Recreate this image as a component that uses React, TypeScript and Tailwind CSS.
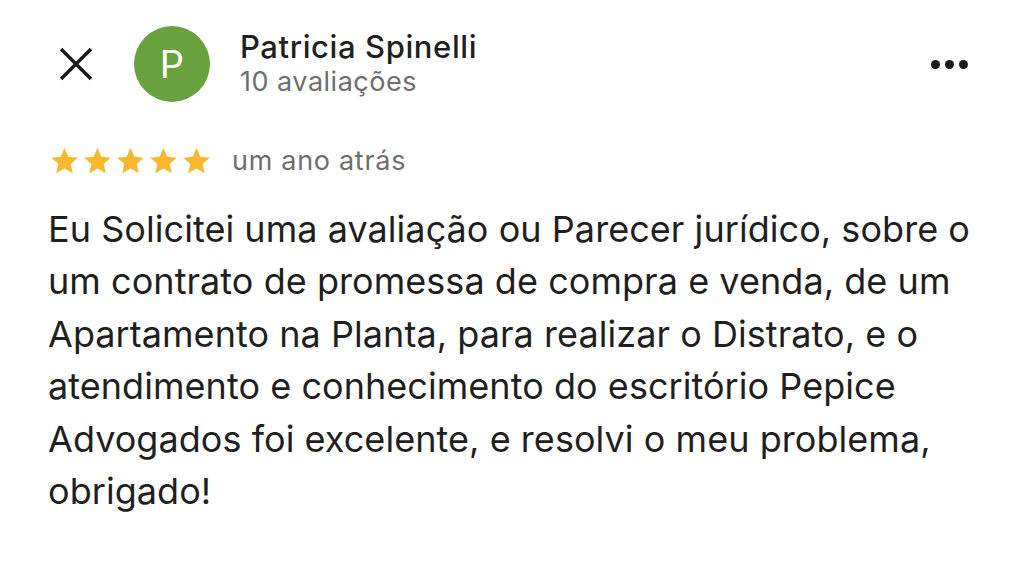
import React from "react";

const Star = () => (
  <svg width="31" height="30" viewBox="0 0 24 24" className="shrink-0">
    <path
      d="M12 1.6l3.12 6.95 7.48.75-5.65 5.06 1.64 7.4L12 17.9l-6.59 3.86 1.64-7.4L1.4 9.3l7.48-.75z"
      fill="#f8b830"
    />
  </svg>
);

export default function App() {
  const lines = [
    "Eu Solicitei uma avaliação ou Parecer jurídico, sobre o",
    "um contrato de promessa de compra e venda, de um",
    "Apartamento na Planta, para realizar o Distrato, e o",
    "atendimento e conhecimento do escritório Pepice",
    "Advogados foi excelente, e resolvi o meu problema,",
    "obrigado!",
  ];
  return (
    <div
      className="w-[1024px] h-[567px] bg-white overflow-hidden"
      style={{ fontFamily: "Inter, 'Noto Sans', sans-serif" }}
    >
      <div className="flex items-center h-[128px] pl-[58px] pr-[56px]">
        <svg width="36" height="36" viewBox="0 0 36 36" className="shrink-0">
          <path d="M3 3L33 33M33 3L3 33" stroke="#1c1c1c" strokeWidth="3.6" strokeLinecap="butt" />
        </svg>
        <div className="ml-[40px] w-[76px] h-[76px] rounded-full bg-[#68a23e] flex items-center justify-center shrink-0">
          <span className="text-white text-[38px] leading-none font-normal">P</span>
        </div>
        <div className="ml-[30px] flex flex-col">
          <span className="text-[31px] leading-[35px] text-[#1f1f1f] font-medium tracking-[0.6px]">Patricia Spinelli</span>
          <span className="text-[27px] leading-[35px] text-[#6e6e6e] tracking-[0.5px]">10 avaliações</span>
        </div>
        <div className="ml-auto flex items-center gap-[5px]">
          <span className="w-[9px] h-[9px] rounded-full bg-[#1c1c1c]" />
          <span className="w-[9px] h-[9px] rounded-full bg-[#1c1c1c]" />
          <span className="w-[9px] h-[9px] rounded-full bg-[#1c1c1c]" />
        </div>
      </div>
      <div className="flex items-center pl-[49px] mt-[5px] h-[56px]">
        <div className="flex items-center gap-[2px]">
          <Star />
          <Star />
          <Star />
          <Star />
          <Star />
        </div>
        <span className="ml-[20px] text-[27px] text-[#6e6e6e] tracking-[0.7px]">um ano atrás</span>
      </div>
      <div className="pl-[48px] mt-[14px] text-[36px] leading-[52.4px] text-[#1f1f1f] whitespace-nowrap tracking-[0.05px]">
        {lines.map((l, i) => (
          <div key={i}>{l}</div>
        ))}
      </div>
    </div>
  );
}
